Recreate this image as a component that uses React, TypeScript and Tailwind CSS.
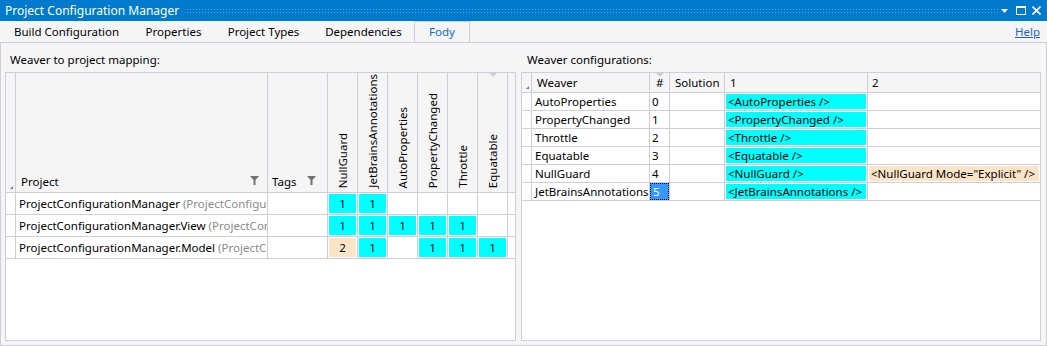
const weavers = ['NullGuard', 'JetBrainsAnnotations', 'AutoProperties', 'PropertyChanged', 'Throttle', 'Equatable'];

const projects = [
  { name: 'ProjectConfigurationManager', hint: ' (ProjectConfigurationManager)', cells: ['1', '1', '', '', '', ''] },
  { name: 'ProjectConfigurationManager.View', hint: ' (ProjectConfigurationManager.View)', cells: ['1', '1', '1', '1', '1', ''] },
  { name: 'ProjectConfigurationManager.Model', hint: ' (ProjectConfigurationManager.Model)', cells: ['2', '1', '', '1', '1', '1'] },
];

const configs = [
  { weaver: 'AutoProperties', index: 0, first: '<AutoProperties />', second: '' },
  { weaver: 'PropertyChanged', index: 1, first: '<PropertyChanged />', second: '' },
  { weaver: 'Throttle', index: 2, first: '<Throttle />', second: '' },
  { weaver: 'Equatable', index: 3, first: '<Equatable />', second: '' },
  { weaver: 'NullGuard', index: 4, first: '<NullGuard />', second: '<NullGuard Mode="Explicit" />' },
  { weaver: 'JetBrainsAnnotations', index: 5, first: '<JetBrainsAnnotations />', second: '' },
];

function Funnel() {
  return (
    <svg width="9" height="9" viewBox="0 0 9 9" className="shrink-0">
      <path d="M0 0h9L5.5 4v5h-2V4z" fill="#717171" />
    </svg>
  );
}

function Corner() {
  return (
    <svg width="3" height="3" viewBox="0 0 3 3">
      <path d="M3 0v3H0z" fill="#7a7a7a" />
    </svg>
  );
}

function SortArrow() {
  return (
    <svg width="8" height="4" viewBox="0 0 8 4" className="absolute top-0 left-1/2 -translate-x-1/2">
      <path d="M0 0h8L4 4z" fill="#d0d0da" />
    </svg>
  );
}

function MappingGrid() {
  return (
    <div className="flex-1 flex flex-col border border-[#cccedb] bg-white">
      <div className="flex h-[120px] shrink-0 border-b border-[#cccedb] bg-[#f5f5f5]">
        <div className="w-[10px] border-r border-[#cccedb] flex items-end justify-end pr-[2px] pb-[3px]">
          <Corner />
        </div>
        <div className="w-[252px] border-r border-[#cccedb] flex items-end justify-between pl-[5px] pr-[8px] pb-[3px]">
          <span className="leading-[15px]">Project</span>
          <span className="pb-[4px]"><Funnel /></span>
        </div>
        <div className="w-[60px] border-r border-[#cccedb] flex items-end justify-between pl-[4px] pr-[11px] pb-[3px]">
          <span className="leading-[15px]">Tags</span>
          <span className="pb-[4px]"><Funnel /></span>
        </div>
        {weavers.map((w) => (
          <div key={w} className="relative w-[30px] border-r border-[#cccedb] flex items-end justify-center pb-[4px]">
            <span className="[writing-mode:vertical-rl] rotate-180 whitespace-nowrap leading-[15px]">{w}</span>
            {w === 'Equatable' && <SortArrow />}
          </div>
        ))}
        <div className="flex-1" />
      </div>
      {projects.map((p) => (
        <div key={p.name} className="flex h-[22px] border-b border-[#cccedb]">
          <div className="w-[10px] border-r border-[#cccedb]" />
          <div className="w-[252px] border-r border-[#cccedb] overflow-hidden whitespace-nowrap pl-[3px] leading-[21px]">
            {p.name}
            <span className="text-[#8a8a8a]">{p.hint}</span>
          </div>
          <div className="w-[60px] border-r border-[#cccedb]" />
          {p.cells.map((c, i) => (
            <div key={i} className="w-[30px] border-r border-[#cccedb] p-px">
              {c && (
                <div className={`h-full flex items-center justify-center ${c === '2' ? 'bg-[#fde4c6]' : 'bg-[#00ffff]'}`}>
                  {c}
                </div>
              )}
            </div>
          ))}
          <div className="flex-1" />
        </div>
      ))}
    </div>
  );
}

function ConfigGrid() {
  return (
    <div className="flex-1 flex flex-col border border-[#cccedb] bg-white">
      <div className="flex h-[20px] shrink-0 border-b border-[#cccedb] bg-[#f5f5f5] leading-[19px]">
        <div className="w-[10px] border-r border-[#cccedb] flex items-end justify-end pr-[2px] pb-[3px]">
          <Corner />
        </div>
        <div className="w-[118px] border-r border-[#cccedb] pl-[5px]">Weaver</div>
        <div className="relative w-[20px] border-r border-[#cccedb] pl-[6px]">
          #
          <SortArrow />
        </div>
        <div className="w-[55px] border-r border-[#cccedb] pl-[5px]">Solution</div>
        <div className="w-[143px] border-r border-[#cccedb] pl-[5px]">1</div>
        <div className="flex-1 pl-[4px]">2</div>
      </div>
      {configs.map((c) => (
        <div key={c.weaver} className="flex h-[18px] border-b border-[#cccedb] leading-[16px]">
          <div className="w-[10px] border-r border-[#cccedb]" />
          <div className="w-[118px] border-r border-[#cccedb] pl-[3px] pt-px whitespace-nowrap overflow-hidden">{c.weaver}</div>
          <div className="w-[20px] border-r border-[#cccedb]">
            {c.index === 5 ? (
              <div className="h-full bg-[#3399ff] text-white border border-dotted border-black pl-[2px] leading-[15px]">{c.index}</div>
            ) : (
              <div className="pl-[2px] pt-px">{c.index}</div>
            )}
          </div>
          <div className="w-[55px] border-r border-[#cccedb]" />
          <div className="w-[143px] border-r border-[#cccedb] p-px">
            <div className="h-full bg-[#00ffff] pl-[2px] whitespace-nowrap overflow-hidden">{c.first}</div>
          </div>
          <div className="flex-1 p-px">
            {c.second && <div className="h-full bg-[#fde4c6] pl-[2px] whitespace-nowrap overflow-hidden">{c.second}</div>}
          </div>
        </div>
      ))}
    </div>
  );
}

const tabs = [
  { label: 'Build Configuration', w: 'w-[133px]' },
  { label: 'Properties', w: 'w-[81px]' },
  { label: 'Project Types', w: 'w-[99px]' },
  { label: 'Dependencies', w: 'w-[101px]' },
];

export default function App() {
  return (
    <div className="w-[1047px] h-[346px] bg-[#f5f5f5] flex flex-col text-[11.5px] text-black overflow-hidden [font-family:'Segoe_UI','Noto_Sans',sans-serif]">
      <div className="h-[21px] shrink-0 bg-[#007acc] flex items-center text-white">
        <span className="pl-[5px] text-[12px] whitespace-nowrap">Project Configuration Manager</span>
        <div className="flex-1 h-[6px] ml-[7px] bg-[radial-gradient(circle,#4fa6e3_0.55px,transparent_0.85px)] bg-[length:3px_3px]" />
        <div className="flex items-center ml-[3px] pr-[6px]">
          <svg width="7" height="4" viewBox="0 0 7 4">
            <path d="M0 0h7L3.5 4z" fill="#fff" />
          </svg>
          <svg width="10" height="9" viewBox="0 0 10 9" className="ml-[8px]">
            <rect x="0.5" y="0.5" width="9" height="8" fill="none" stroke="#fff" />
            <rect x="0" y="0" width="10" height="2" fill="#fff" />
          </svg>
          <svg width="9" height="9" viewBox="0 0 9 9" className="ml-[6px]">
            <path d="M0.5 0.5L8.5 8.5M8.5 0.5L0.5 8.5" stroke="#fff" strokeWidth="1.6" />
          </svg>
        </div>
      </div>

      <div className="h-[21px] shrink-0 flex items-stretch">
        {tabs.map((t) => (
          <div key={t.label} className={`${t.w} flex items-center justify-center whitespace-nowrap`}>
            {t.label}
          </div>
        ))}
        <div className="w-[56px] border-l border-t border-r border-[#cccedb] flex items-center justify-center text-[#0e70c0]">
          Fody
        </div>
        <div className="flex-1" />
        <a href="#" className="self-center pr-[7px] text-[#1a5fd0] underline">Help</a>
      </div>

      <div className="flex-1 flex gap-[5px] pl-[4px] pr-[5px] pb-[4px] border border-[#cccedb]">
        <div className="w-[511px] flex flex-col">
          <div className="h-[29px] shrink-0 flex items-center pt-[5px] pl-[5px]">Weaver to project mapping:</div>
          <MappingGrid />
        </div>
        <div className="flex-1 flex flex-col">
          <div className="h-[29px] shrink-0 flex items-center pt-[5px] pl-[6px]">Weaver configurations:</div>
          <ConfigGrid />
        </div>
      </div>
    </div>
  );
}
